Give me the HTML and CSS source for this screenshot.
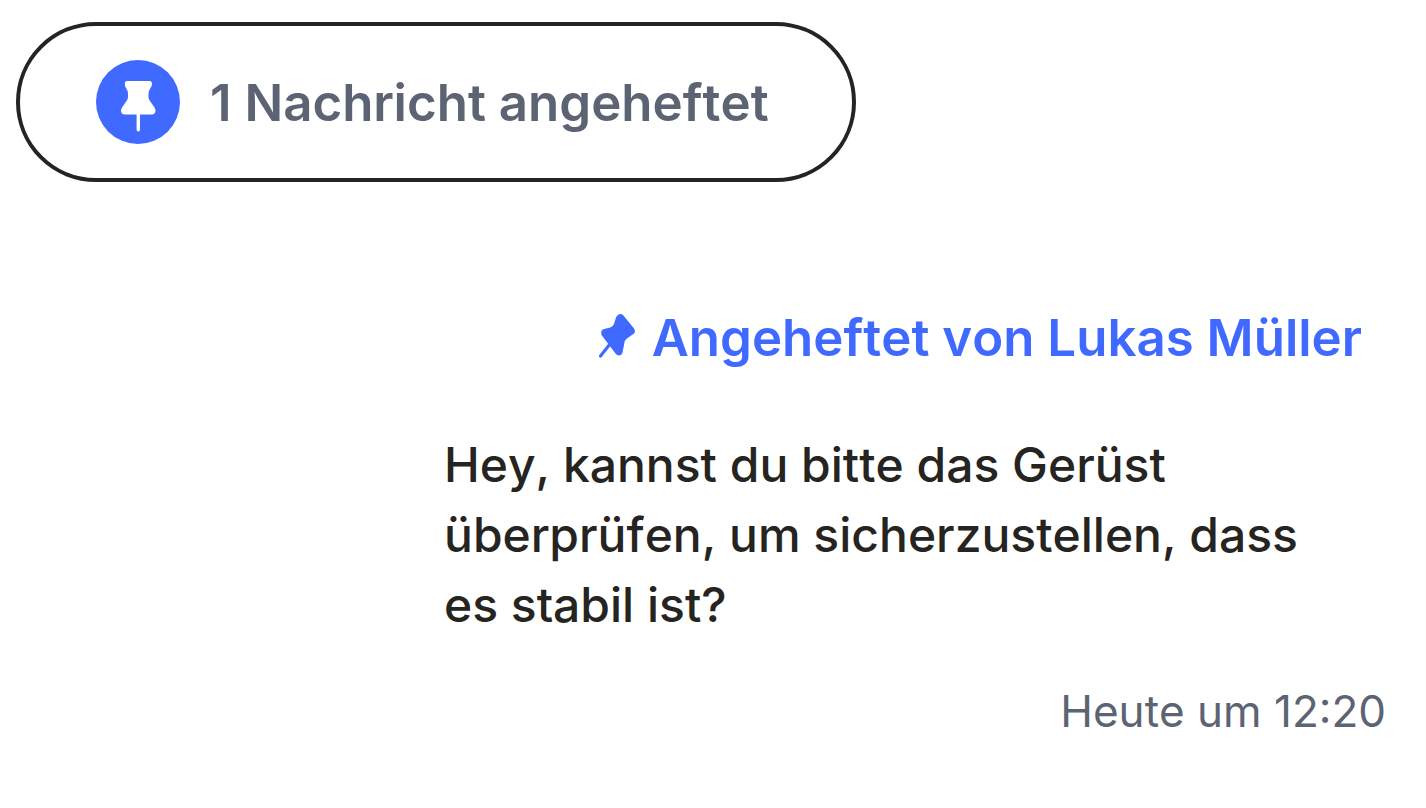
FILE: index.html
```html
<!DOCTYPE html>
<html lang="de">
<head>
    <meta charset="UTF-8">
    <meta name="viewport" content="width=device-width, initial-scale=1.0">
    <title>Angeheftete Nachrichten</title>
    <link rel="stylesheet" href="styles.css">
</head>
<body>
    <main class="chat">
        <button type="button" class="pinned-pill">
            <svg class="pin-badge" viewBox="0 0 84 84" aria-hidden="true">
                <circle cx="42" cy="42" r="42" fill="#4069ff"/>
                <path d="M31 21H53.500Q56 21 56 24Q56 26 54.500 28Q52.500 30.500 52.500 34V37Q52.500 39.500 54 41L58.500 47.500Q60 50 59.300 52Q58.500 54.500 56 54.500H28.500Q26 54.500 25.200 52Q24.500 50 26 47.500L30.500 41Q32 39.500 32 37V34Q32 30.500 30 28Q28.800 26 28.800 24Q28.800 21 31 21Z" fill="#fff"/>
                <path d="M42.300 53v16.800" stroke="#fff" stroke-width="3.400" stroke-linecap="round"/>
            </svg>
            <span>1 Nachricht angeheftet</span>
        </button>

        <article class="message">
            <p class="pinned-by">
                <svg class="pin-icon" viewBox="0 0 38 50" aria-hidden="true">
                    <path d="M20 2Q22.500 0 25 2L36 15.500Q37.800 18.500 36 20.500L29 25.500Q26.300 27.500 26.300 30.500L24.500 39.500Q23.500 42.500 21 42.500Q19 42.500 17.500 40.500L3.500 22Q2.300 19 4 17Q5 16 8 15.500L11.500 14.800Q15.500 13.500 16.500 9.500L18 4.500Q18.500 3 20 2Z" fill="#4069ff"/>
                    <path d="M12 31L2.500 43" stroke="#4069ff" stroke-width="3.200" stroke-linecap="round"/>
                </svg>
                <span>Angeheftet von Lukas Müller</span>
            </p>
            <p class="text">Hey, kannst du bitte das Gerüst überprüfen, um sicherzustellen, dass es stabil ist?</p>
            <time class="time">Heute um 12:20</time>
        </article>
    </main>
</body>
</html>
```

FILE: styles.css
```css
* {
    margin: 0;
    padding: 0;
    box-sizing: border-box;
}

body {
    background: #fff;
    font-family: 'Inter', sans-serif;
    font-kerning: none;
    color: #262421;
}

.chat {
    display: flex;
    flex-direction: column;
    align-items: flex-start;
    padding: 22px 40px 40px 16px;
}

.pinned-pill {
    display: flex;
    align-items: center;
    gap: 30px;
    height: 160px;
    padding: 0 83px 0 76px;
    background: #fff;
    border: 4px solid #262421;
    border-radius: 80px;
    font-family: inherit;
    font-kerning: none;
    font-size: 51px;
    font-weight: 600;
    color: #5c6373;
    white-space: nowrap;
    cursor: pointer;
}

.pin-badge {
    width: 84px;
    height: 84px;
}

.message {
    display: flex;
    flex-direction: column;
    align-self: flex-end;
    max-width: 942px;
    margin-top: 121px;
}

.pinned-by {
    display: flex;
    align-items: center;
    align-self: flex-end;
    gap: 16px;
    margin-right: 24px;
    font-size: 51px;
    font-weight: 600;
    line-height: 70px;
    color: #4069ff;
}

.pin-icon {
    width: 38px;
    height: 50px;
}

.text {
    margin-top: 57px;
    padding-right: 80px;
    font-size: 48px;
    font-weight: 500;
    line-height: 70px;
}

.time {
    align-self: flex-end;
    margin-top: 36px;
    font-size: 44px;
    line-height: 70px;
    color: #5c6373;
}
```
